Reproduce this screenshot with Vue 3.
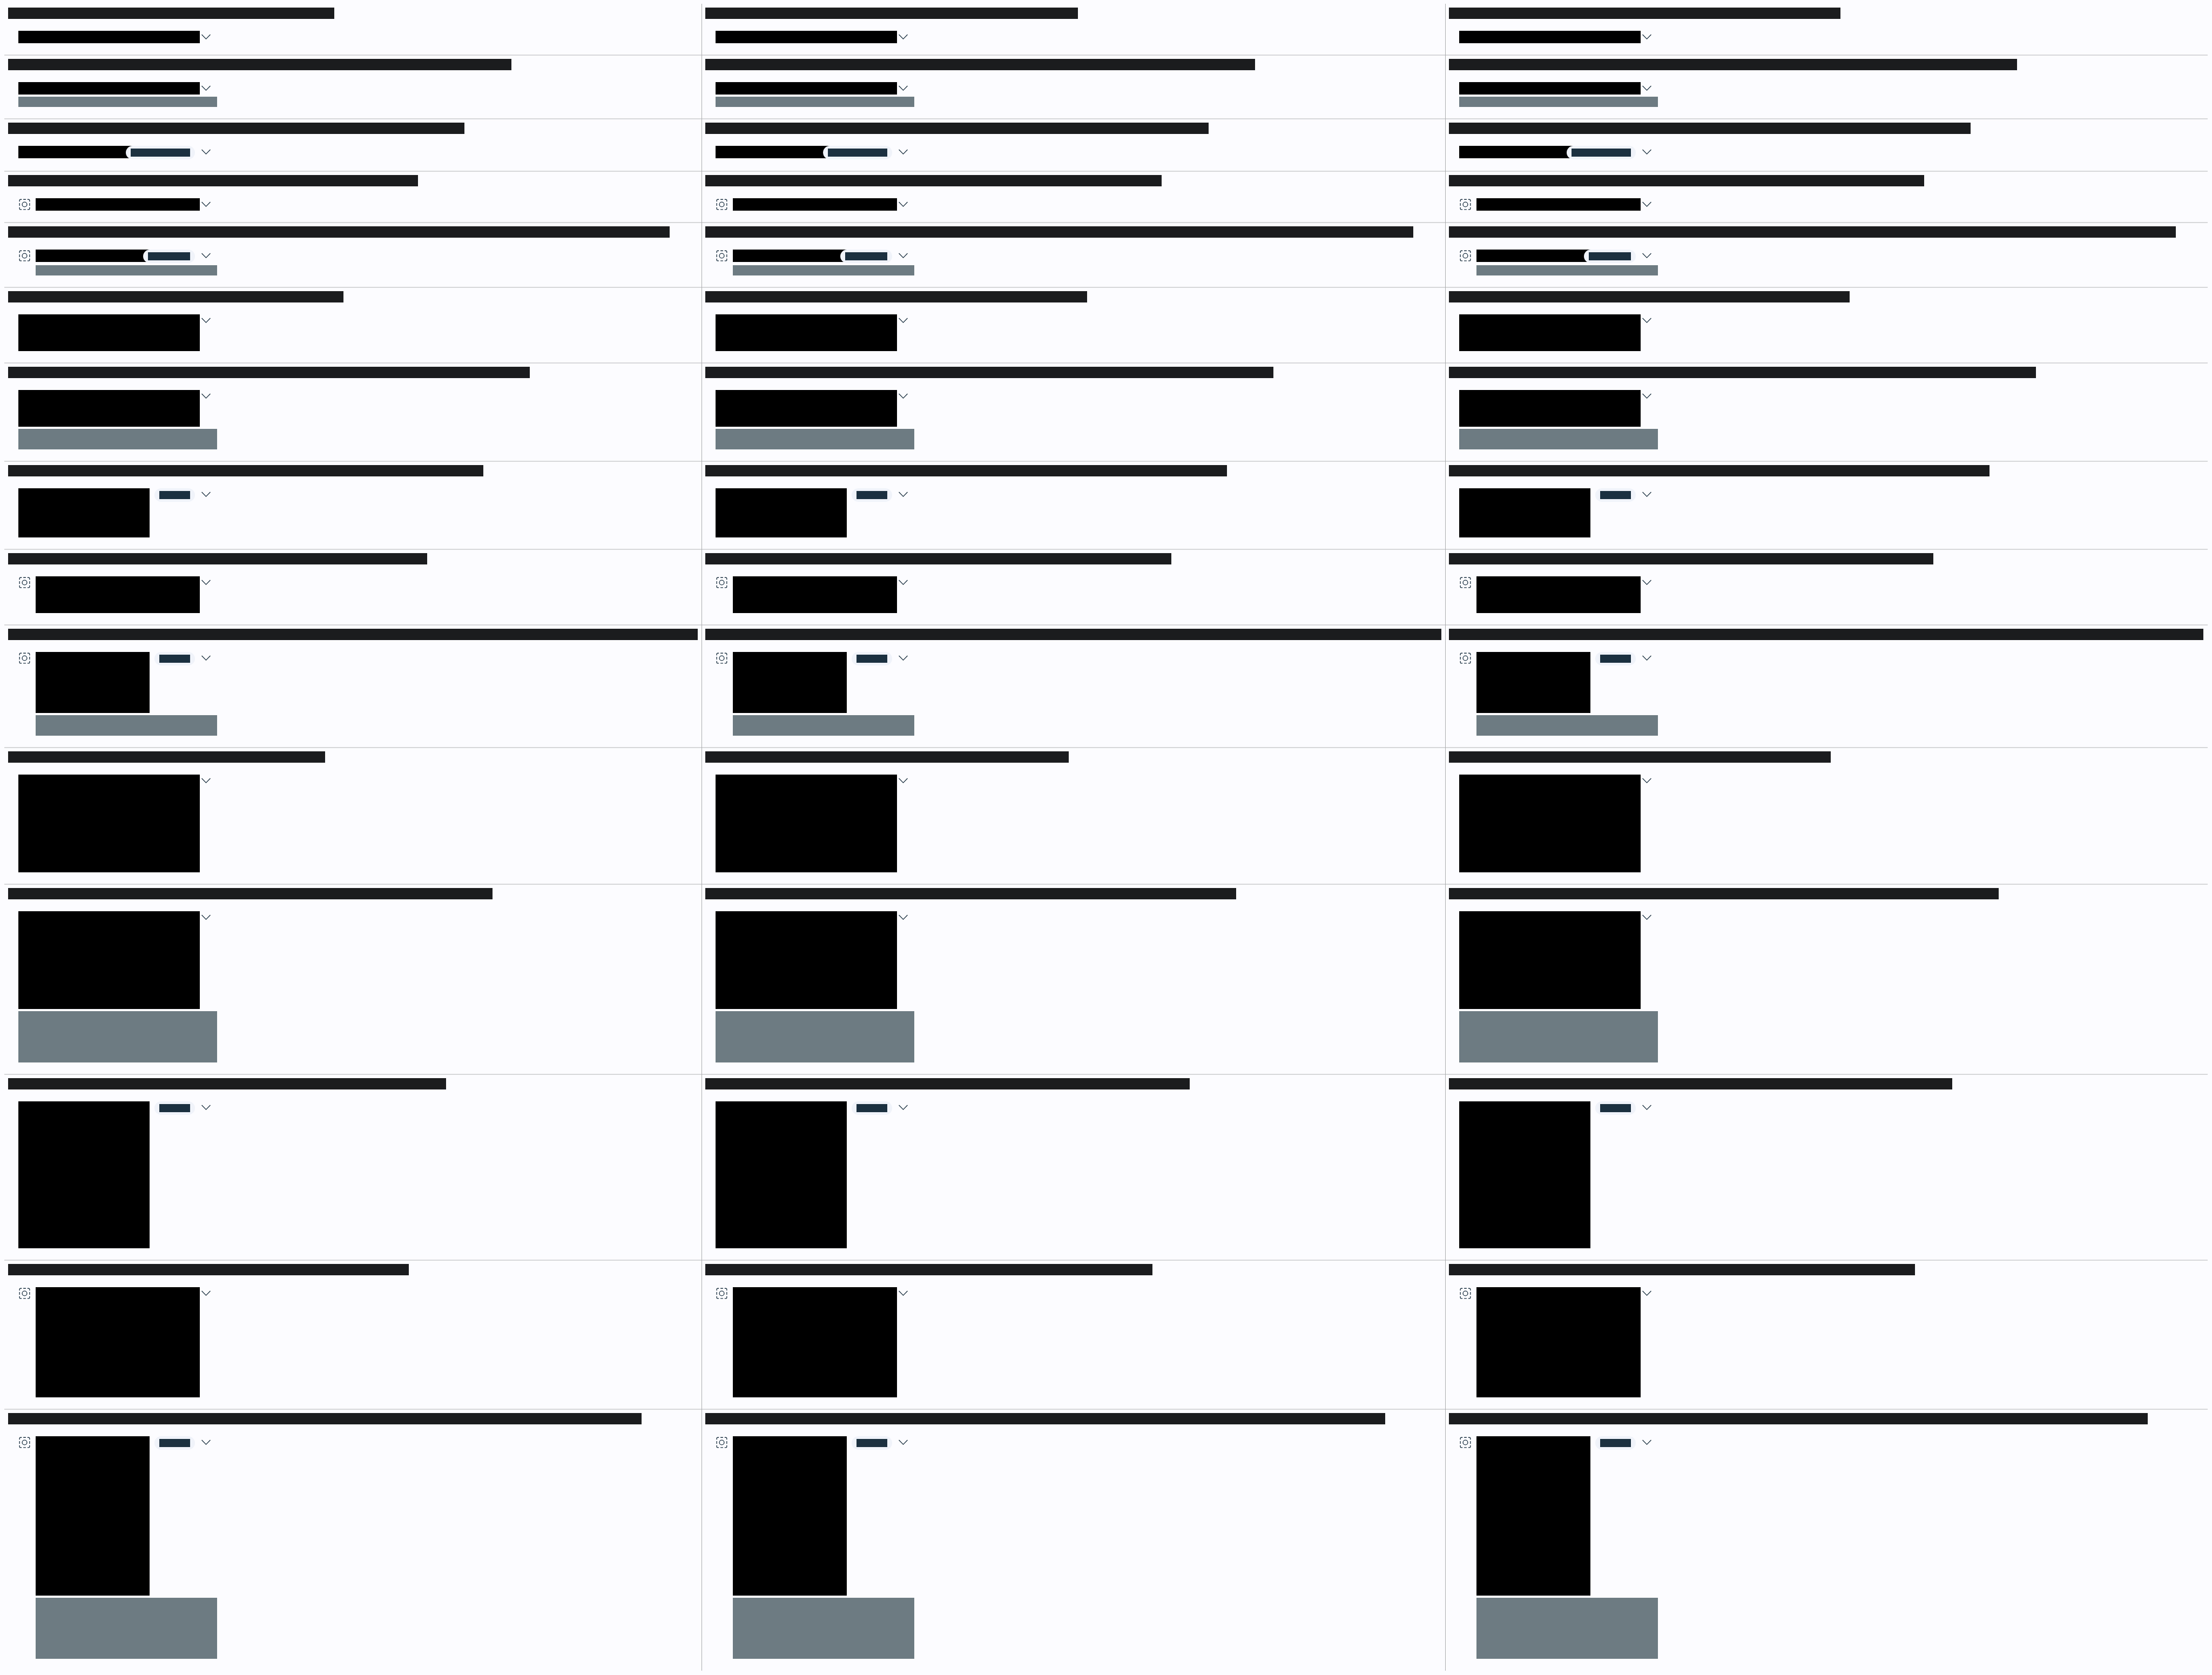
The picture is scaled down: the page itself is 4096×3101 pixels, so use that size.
<script setup>
const CHAR_WIDTH = 17.25

// Heights of each sample: title block, optional subtitle; chip size and leading icon flags.
const samples = [
  { chars: 35, title: 23 },
  { chars: 54, title: 23, subtitle: 19 },
  { chars: 49, title: 23, chip: 'wide' },
  { chars: 44, title: 23, icon: true },
  { chars: 71, title: 23, subtitle: 19, chip: 'medium', icon: true },
  { chars: 36, title: 68 },
  { chars: 56, title: 68, subtitle: 38 },
  { chars: 51, title: 91, chip: 'small' },
  { chars: 45, title: 68, icon: true },
  { chars: 74, title: 113, subtitle: 38, chip: 'small', icon: true },
  { chars: 34, title: 181 },
  { chars: 52, title: 181, subtitle: 95 },
  { chars: 47, title: 272, chip: 'small' },
  { chars: 43, title: 204, icon: true },
  { chars: 68, title: 295, subtitle: 113, chip: 'small', icon: true },
]

// Every column repeats the samples under a longer caption.
const columns = [0, 5, 7]

const captionWidth = (chars) => Math.round(chars * CHAR_WIDTH) + 'px'
</script>

<template>
  <main class="board">
    <section v-for="extra in columns" :key="extra" class="column">
      <article v-for="(s, i) in samples" :key="i" class="cell">
        <div class="caption" :style="{ width: captionWidth(s.chars + extra) }"></div>
        <div class="header">
          <svg v-if="s.icon" class="lead" viewBox="0 0 24 24" aria-hidden="true">
            <path d="M2.300 6.500V4.300a2 2 0 0 1 2-2H6.500M9.500 2.300h5M17.500 2.300h2.200a2 2 0 0 1 2 2V6.500M21.700 9.500v5M21.700 17.500v2.200a2 2 0 0 1-2 2H17.500M14.500 21.700h-5M6.500 21.700H4.300a2 2 0 0 1-2-2V17.500M2.300 14.500v-5" />
            <circle cx="12" cy="12" r="4.600" />
          </svg>
          <div class="body">
            <div class="line">
              <div
                class="title"
                :class="{ clipped: s.chip && s.chip !== 'small' }"
                :style="{ height: s.title + 'px' }"
              ></div>
              <div v-if="s.chip" class="chip" :class="s.chip"><span class="label"></span></div>
              <button class="toggle" type="button" aria-label="Expand">
                <svg viewBox="0 0 24 24" aria-hidden="true"><path d="M3.700 7.400 12 15.800l8.300-8.400" /></svg>
              </button>
            </div>
            <div v-if="s.subtitle" class="subtitle" :style="{ height: s.subtitle + 'px' }"></div>
          </div>
        </div>
      </article>
    </section>
  </main>
</template>

<style>
body {
  margin: 0;
  background: #fcfcff;
}
</style>

<style scoped>
.board {
  box-sizing: border-box;
  display: grid;
  grid-template-columns: 1291fr 1377fr 1412fr;
  min-height: 100vh;
  padding: 7px 8px 8px;
  background: #fcfcff;
  font-family: "Liberation Sans", sans-serif;
}
.column {
  min-width: 0;
}
.column + .column {
  border-left: 1px solid #abacae;
}
.cell {
  padding: 6px 6px 21px;
  border-bottom: 2px solid #d6d7d9;
}
.column:first-child .cell {
  padding-left: 7px;
}
.cell:first-child {
  padding-top: 7px;
}
.cell:last-child {
  border-bottom: 0;
}
.caption {
  height: 21px;
  max-width: 100%;
  background: #1b1c1e;
}
.header {
  display: flex;
  align-items: flex-start;
  gap: 9px;
  width: 368px;
  margin: 22px 0 0 19px;
}
.lead {
  flex: none;
  width: 23px;
  height: 23px;
}
.lead path,
.lead circle,
.toggle path {
  fill: none;
  stroke: #1b3040;
  stroke-width: 1.4;
}
.body {
  flex: 1;
  min-width: 0;
}
.line {
  display: flex;
  align-items: flex-start;
  padding-right: 9px;
}
.title {
  flex: 1;
  background: #000;
}
.title.clipped {
  flex: none;
  width: 219px;
}
.chip {
  flex: none;
  margin: 0 9px;
  padding: 5px 9px;
  border-radius: 13px;
  background: #f0f3fa;
}
.clipped + .chip {
  margin-left: -20px;
}
.label {
  display: block;
  width: 57px;
  height: 15px;
  background: #1b3040;
}
.medium .label {
  width: 78px;
}
.wide .label {
  width: 110px;
}
.toggle {
  flex: none;
  width: 23px;
  height: 23px;
  padding: 0;
  border: 0;
  background: none;
}
.toggle svg {
  display: block;
  width: 23px;
  height: 23px;
}
.subtitle {
  margin-top: 4px;
  background: #6d7b82;
}
</style>
